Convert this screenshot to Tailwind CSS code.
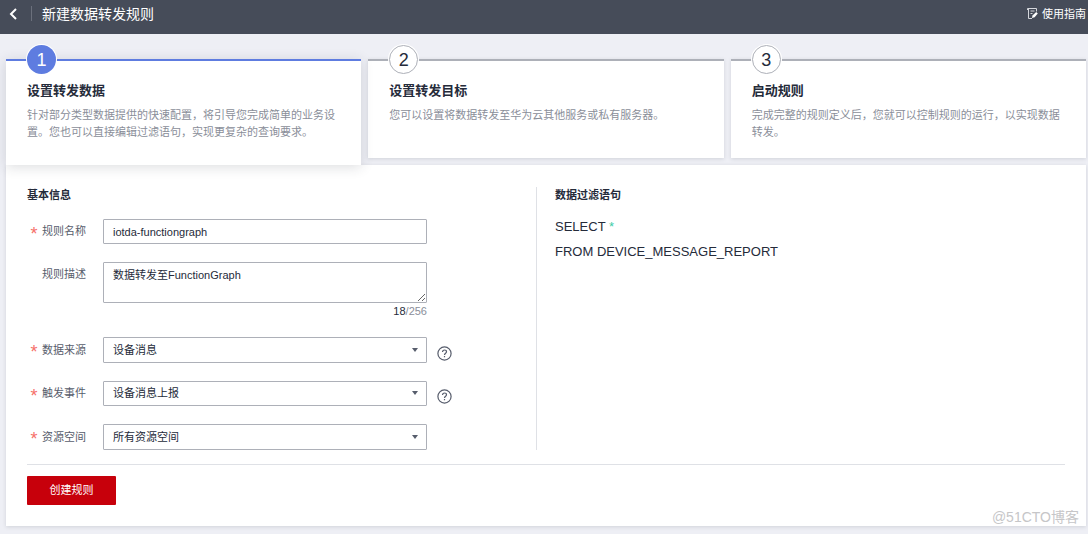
<!DOCTYPE html>
<html lang="zh-CN">
<head>
<meta charset="utf-8">
<meta name="viewport" content="width=device-width, initial-scale=1">
<title>新建数据转发规则</title>
<script src="https://cdn.jsdelivr.net/npm/@tailwindcss/browser@4"></script>
</head>
<body class="relative min-h-screen bg-[#eeeff5] font-['Liberation_Sans','Noto_Sans_CJK_SC',sans-serif] text-[11px] text-[#252b3a]">
<header class="flex h-[34px] items-center bg-[#464c59] pr-[2px] pb-[7px] pl-2 text-white">
  <button type="button" aria-label="返回" class="flex h-4 w-[10px] items-center justify-center">
    <svg class="h-3 w-2" viewBox="0 0 8 12" fill="none" stroke="currentColor" stroke-width="2"><path d="M7 1 2 6l5 5"/></svg>
  </button>
  <span class="ml-[13px] h-[15px] w-px bg-[#6b707c]"></span>
  <h1 class="ml-[10px] text-[14px] leading-5">新建数据转发规则</h1>
  <a href="#" class="ml-auto flex items-center gap-1 leading-4">
    <svg class="h-[11px] w-[11px]" viewBox="0 0 11 11" fill="none" stroke="#d5d7dc" stroke-width="1"><path d="M9.5 3.5v-3H.5v1.5M1.5.5v10H5M3.5 3h4M3.5 5.5h2"/><path d="M5 10 5.5 7.6 9.2 4l1.6 1.4-3.2 3.8z" fill="#fff" stroke="none"/></svg>
    使用指南
  </a>
</header>
<main class="pt-[25px] pr-[2px] pb-2 pl-[6px]">
  <ol class="grid grid-cols-3 items-start gap-[7px]">
    <li class="relative z-10 h-[106px] border-t-2 border-[#5e7ce0] bg-white px-[21px] shadow-[0_2px_12px_rgba(37,43,58,0.16)]">
      <span class="-mt-4 flex size-[29px] items-center justify-center rounded-full bg-[#5e7ce0] text-[18px] leading-5 text-white ring-1 ring-white">1</span>
      <h2 class="mt-[7px] text-[13px] leading-5 font-bold">设置转发数据</h2>
      <p class="mt-[6px] leading-[17px] text-[#8a8e99]">针对部分类型数据提供的快速配置，将引导您完成简单的业务设置。您也可以直接编辑过滤语句，实现更复杂的查询要求。</p>
    </li>
    <li class="h-[99px] border-t-2 border-[#adb0b8] bg-white px-[21px] shadow-[0_1px_4px_rgba(37,43,58,0.14)]">
      <span class="-mt-4 flex size-[29px] items-center justify-center rounded-full border border-[#adb0b8] bg-white text-[18px] leading-5 ring-1 ring-white">2</span>
      <h2 class="mt-[7px] text-[13px] leading-5 font-bold">设置转发目标</h2>
      <p class="mt-[6px] leading-[17px] text-[#8a8e99]">您可以设置将数据转发至华为云其他服务或私有服务器。</p>
    </li>
    <li class="h-[99px] border-t-2 border-[#adb0b8] bg-white px-[21px] shadow-[0_1px_4px_rgba(37,43,58,0.14)]">
      <span class="-mt-4 flex size-[29px] items-center justify-center rounded-full border border-[#adb0b8] bg-white text-[18px] leading-5 ring-1 ring-white">3</span>
      <h2 class="mt-[7px] text-[13px] leading-5 font-bold">启动规则</h2>
      <p class="mt-[6px] leading-[17px] text-[#8a8e99]">完成完整的规则定义后，您就可以控制规则的运行，以实现数据转发。</p>
    </li>
  </ol>
  <form class="bg-white px-[21px] pt-[22px] pb-[21px] shadow-[0_1px_4px_rgba(37,43,58,0.14)]">
    <div class="flex pr-px">
      <section class="flex-1 border-r border-[#dfe1e6]">
        <h3 class="leading-4 font-bold">基本信息</h3>
        <div class="mt-4 flex flex-col gap-[18px]">
          <div class="flex">
            <label for="name" class="flex w-[76px] items-center gap-1 pl-[3px] text-[#575d6c]"><span class="flex w-2 justify-center pt-1 text-[18px] leading-4 text-[#f66f6a]">*</span><span>规则名称</span></label>
            <input id="name" type="text" value="iotda-functiongraph" class="h-[25px] w-[324px] rounded-[1px] border border-[#adb0b8] px-[9px]">
          </div>
          <div class="flex">
            <label for="desc" class="w-[76px] pt-1 pl-[15px] leading-4 text-[#575d6c]">规则描述</label>
            <div class="w-[324px]">
              <textarea id="desc" class="block h-[41px] w-full rounded-[1px] border border-[#adb0b8] px-[9px] py-1 leading-4">数据转发至FunctionGraph</textarea>
              <p class="mt-[1px] text-right leading-[15px] text-[#8a8e99]"><span class="text-[#252b3a]">18</span>/256</p>
            </div>
          </div>
          <div class="flex">
            <label for="source" class="flex w-[76px] items-center gap-1 pl-[3px] text-[#575d6c]"><span class="flex w-2 justify-center pt-1 text-[18px] leading-4 text-[#f66f6a]">*</span><span>数据来源</span></label>
            <div class="relative w-[324px]">
              <select id="source" class="block h-[26px] w-full appearance-none rounded-[1px] border border-[#adb0b8] px-[9px]"><option>设备消息</option></select>
              <svg class="pointer-events-none absolute top-[11px] right-[9px] h-1 w-[6px]" viewBox="0 0 6 4" fill="#575d6c"><path d="M0 0h6L3 4z"/></svg>
            </div>
            <button type="button" aria-label="数据来源帮助" class="ml-[10px] self-end pb-[2px] text-[#575d6c]"><svg class="size-[15px]" viewBox="0 0 15 15" fill="none" stroke="currentColor" stroke-width="1.2"><circle cx="7.5" cy="7.5" r="6.6"/><path d="M5.5 6.1c0-1.3.8-2.1 2-2.1s2 .8 2 1.8c0 1.3-2 1.5-2 3.1M7.5 10v1.3"/></svg></button>
          </div>
          <div class="flex">
            <label for="event" class="flex w-[76px] items-center gap-1 pl-[3px] text-[#575d6c]"><span class="flex w-2 justify-center pt-1 text-[18px] leading-4 text-[#f66f6a]">*</span><span>触发事件</span></label>
            <div class="relative w-[324px]">
              <select id="event" class="block h-[25px] w-full appearance-none rounded-[1px] border border-[#adb0b8] px-[9px]"><option>设备消息上报</option></select>
              <svg class="pointer-events-none absolute top-[10px] right-[9px] h-1 w-[6px]" viewBox="0 0 6 4" fill="#575d6c"><path d="M0 0h6L3 4z"/></svg>
            </div>
            <button type="button" aria-label="触发事件帮助" class="ml-[10px] self-end pb-[2px] text-[#575d6c]"><svg class="size-[15px]" viewBox="0 0 15 15" fill="none" stroke="currentColor" stroke-width="1.2"><circle cx="7.5" cy="7.5" r="6.6"/><path d="M5.5 6.1c0-1.3.8-2.1 2-2.1s2 .8 2 1.8c0 1.3-2 1.5-2 3.1M7.5 10v1.3"/></svg></button>
          </div>
          <div class="flex">
            <label for="space" class="flex w-[76px] items-center gap-1 pl-[3px] text-[#575d6c]"><span class="flex w-2 justify-center pt-1 text-[18px] leading-4 text-[#f66f6a]">*</span><span>资源空间</span></label>
            <div class="relative w-[324px]">
              <select id="space" class="block h-[26px] w-full appearance-none rounded-[1px] border border-[#adb0b8] px-[9px]"><option>所有资源空间</option></select>
              <svg class="pointer-events-none absolute top-[11px] right-[9px] h-1 w-[6px]" viewBox="0 0 6 4" fill="#575d6c"><path d="M0 0h6L3 4z"/></svg>
            </div>
          </div>
        </div>
      </section>
      <section class="flex-1 pl-[18px]">
        <h3 class="leading-4 font-bold">数据过滤语句</h3>
        <div class="mt-[11px] text-[13px] leading-[25px]">
          <p>SELECT <span class="text-[#3dcca6]">*</span></p>
          <p>FROM DEVICE_MESSAGE_REPORT</p>
        </div>
      </section>
    </div>
    <div class="mt-[14px] border-t border-[#dfe1e6] pt-[11px]">
      <button type="submit" class="block h-[29px] w-[89px] rounded-[1px] bg-[#c7000b] text-white">创建规则</button>
    </div>
  </form>
</main>
<p class="absolute right-[9px] bottom-[7px] text-[14px] leading-5 text-[#c6c6c8]">@51CTO博客</p>
</body>
</html>
